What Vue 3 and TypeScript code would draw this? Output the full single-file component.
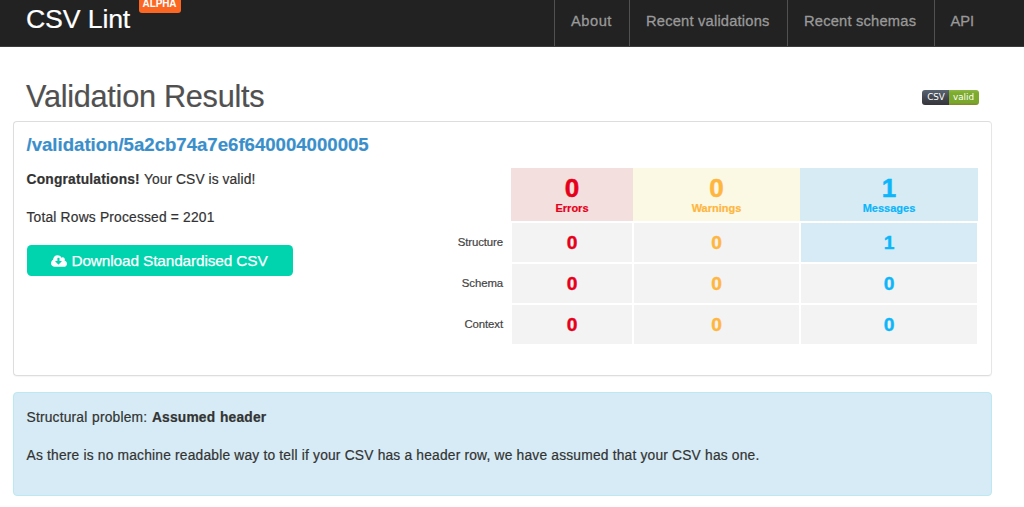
<script setup lang="ts">
interface Tally {
  kind: string
  label: string
  total: number
}

interface Row {
  name: string
  counts: number[]
}

const navItems: string[] = ['About', 'Recent validations', 'Recent schemas', 'API']

const tallies: Tally[] = [
  { kind: 'errors', label: 'Errors', total: 0 },
  { kind: 'warnings', label: 'Warnings', total: 0 },
  { kind: 'messages', label: 'Messages', total: 1 },
]

const rows: Row[] = [
  { name: 'Structure', counts: [0, 0, 1] },
  { name: 'Schema', counts: [0, 0, 0] },
  { name: 'Context', counts: [0, 0, 0] },
]
</script>

<template>
  <div class="page">
    <header class="navbar">
      <a class="brand"><span class="brand-name">CSV Lint</span></a>
      <span class="alpha"><span>ALPHA</span></span>
      <nav class="nav">
        <a v-for="(item, i) in navItems" :key="item" class="nav-item" :class="'nav-' + i"><span>{{ item }}</span></a>
      </nav>
    </header>

    <main class="content">
      <div class="title-row">
        <h1><span>Validation Results</span></h1>
        <div class="badge"><span class="badge-left">CSV</span><span class="badge-right">valid</span></div>
      </div>

      <section class="card">
        <div class="summary">
          <h2><a>/validation/5a2cb74a7e6f640004000005</a></h2>
          <p class="congrats"><strong>Congratulations!</strong> <span>Your CSV is valid!</span></p>
          <p class="total"><span>Total Rows Processed = 2201</span></p>
          <a class="download">
            <svg class="cloud" viewBox="0 0 1920 1408" aria-hidden="true">
              <path
                fill="#fff"
                fill-rule="evenodd"
                d="M1280 736q0-14-9-23t-23-9h-224V352q0-13-9.500-22.500T992 320H800q-13 0-22.500 9.500T768 352v352H544q-13 0-22.500 9.500T512 736q0 14 9 23l352 352q9 9 23 9t23-9l351-351q10-12 10-24zM1920 1024q0 159-112.500 271.500T1536 1408H448q-185 0-316.500-131.500T0 960q0-130 70-240t188-165q-2-30-2-43 0-212 150-362T768 0q156 0 285.500 87T1242 318q71-62 166-62 106 0 181 75t75 181q0 76-41 138 130 31 213.500 135.500T1920 1024z"
              />
            </svg>
            <span>Download Standardised CSV</span>
          </a>
        </div>

        <table class="results">
          <thead>
            <tr>
              <td class="row-name"></td>
              <th v-for="t in tallies" :key="t.kind" :class="t.kind">
                <b>{{ t.total }}</b>
                <span>{{ t.label }}</span>
              </th>
            </tr>
          </thead>
          <tbody>
            <tr v-for="r in rows" :key="r.name">
              <td class="row-name"><span>{{ r.name }}</span></td>
              <td
                v-for="(c, i) in r.counts"
                :key="i"
                class="count"
                :class="[tallies[i].kind, { filled: c > 0 }]"
              >
                <div>{{ c }}</div>
              </td>
            </tr>
          </tbody>
        </table>
      </section>

      <section class="notice">
        <p class="problem"><span>Structural problem:</span> <strong>Assumed header</strong></p>
        <p class="detail"><span>As there is no machine readable way to tell if your CSV has a header row, we have assumed that your CSV has one.</span></p>
      </section>
    </main>
  </div>
</template>

<style>
body {
  background: #fff;
  overflow: hidden;
}
</style>

<style scoped>
.page {
  box-sizing: border-box;
  width: 1024px;
  height: 507px;
  overflow: hidden;
  background: #fff;
  color: #333;
  font: 13.8px/19px 'Liberation Sans', Arial, sans-serif;
}
.page * {
  box-sizing: border-box;
}
.page p,
.page h1,
.page h2 {
  margin: 0;
}
.page p {
  letter-spacing: 0.19px;
  -webkit-text-stroke: 0.2px;
}
.navbar {
  display: flex;
  align-items: flex-start;
  height: 47px;
  padding-left: 26px;
  background: #222;
  border-bottom: 1px solid #3c3c3c;
}
.brand {
  width: 113px;
  padding-top: 4px;
  color: #fff;
  font-size: 26.7px;
  letter-spacing: -0.15px;
  line-height: 30px;
  white-space: nowrap;
  -webkit-text-stroke: 0.2px;
}
.alpha {
  width: 42px;
  height: 12.500px;
  padding-right: 1px;
  border-radius: 0 0 3px 3px;
  background: #fb6723;
  color: #fff;
  font-size: 10px;
  font-weight: bold;
  letter-spacing: -0.1px;
  line-height: 8px;
  text-align: center;
}
.nav {
  display: flex;
  width: 470px;
  height: 46px;
  margin-left: auto;
}
.nav-item {
  height: 46px;
  padding-left: 16px;
  border-left: 1px solid #515151;
  color: #999;
  font-size: 14.7px;
  letter-spacing: 0.2px;
  line-height: 42px;
  white-space: nowrap;
  -webkit-text-stroke: 0.3px;
}
.nav-0 {
  width: 75px;
  letter-spacing: 0.5px;
}
.nav-1 {
  width: 158px;
}
.nav-2 {
  width: 146.500px;
}
.nav-3 {
  flex: 1;
  letter-spacing: 0;
}
.content {
  width: 979px;
  margin-left: 13px;
}
.title-row {
  display: flex;
  justify-content: space-between;
  height: 74px;
  padding: 32px 13px 0;
}
.title-row h1 {
  color: #505050;
  font-size: 30.7px;
  font-weight: normal;
  letter-spacing: -0.28px;
  line-height: 36px;
  -webkit-text-stroke: 0.2px;
}
.badge {
  display: flex;
  width: 57px;
  height: 15px;
  margin-top: 11px;
  overflow: hidden;
  border-radius: 3px;
  color: #fff;
  font: 8.8px/14px 'DejaVu Sans', sans-serif;
  text-align: center;
}
.badge-left {
  width: 27px;
  padding-left: 1px;
  background: linear-gradient(#596472, #454851 50%, #35353b);
}
.badge-right {
  width: 30px;
  padding-right: 1px;
  background: linear-gradient(#8fb74a, #7dac2d 20%, #79a72b 85%, #85842e);
}
.card {
  display: flex;
  justify-content: space-between;
  height: 255px;
  padding: 13px 13px 0 12.500px;
  border: 1px solid #ddd;
  border-right-color: #e6e6e6;
  border-radius: 4px;
  box-shadow: 0 1px 1px rgba(0, 0, 0, 0.04);
}
.summary {
  width: 400px;
  white-space: nowrap;
}
.summary h2 {
  color: #3a8fcb;
  font-size: 18.6px;
  line-height: 20px;
  -webkit-text-stroke: 0.2px;
}
.congrats {
  padding-top: 15px;
}
.congrats span {
  letter-spacing: 0.08px;
}
.total {
  padding-top: 19px;
}
.download {
  display: flex;
  align-items: center;
  justify-content: center;
  width: 266px;
  height: 31px;
  margin-top: 18px;
  border-radius: 4.500px;
  background: #00d4ae;
  color: #fff;
  font-size: 15.4px;
  letter-spacing: -0.13px;
  line-height: 20px;
  -webkit-text-stroke: 0.25px;
}
.cloud {
  width: 16px;
  height: 12px;
  margin-right: 4px;
}
.results {
  width: 552px;
  margin-top: 33px;
  align-self: flex-start;
  border-spacing: 0;
  table-layout: fixed;
  text-align: center;
}
.results th,
.results td {
  padding: 0;
}
.results .row-name {
  width: 85px;
  padding: 1px 8px 0 0;
  color: #444;
  font-size: 11.4px;
  letter-spacing: -0.1px;
  text-align: right;
  -webkit-text-stroke: 0.2px;
}
.results th {
  height: 53px;
  vertical-align: top;
}
.results th b {
  display: block;
  height: 33px;
  padding-top: 5px;
  font-size: 26px;
  line-height: 30px;
  -webkit-text-stroke: 0.5px;
}
.results th span {
  display: block;
  font-size: 11px;
  line-height: 14px;
  -webkit-text-stroke: 0.2px;
}
.results .count {
  height: 41px;
  padding: 2px 1px 0;
  font-size: 19.2px;
  font-weight: bold;
  -webkit-text-stroke: 0.4px;
}
.count div {
  height: 39px;
  background: #f3f3f3;
  line-height: 39px;
}
.count.filled div {
  background: #d6ebf5;
}
.errors {
  width: 122px;
  color: #e60019;
}
.warnings {
  width: 167px;
  color: #ffb640;
}
.messages {
  width: 178px;
  color: #0db6fa;
}
th.errors {
  background: #f4dfdf;
}
th.warnings {
  background: #fbf8e4;
}
th.messages {
  background: #d7ebf5;
}
.notice {
  height: 104px;
  margin-top: 16px;
  padding: 15px 12.500px 0;
  border: 1px solid #bce8f1;
  border-radius: 4px;
  background: #d6ebf5;
  white-space: nowrap;
}
.problem {
  word-spacing: 0.6px;
}
.detail {
  padding-top: 19px;
}
</style>
